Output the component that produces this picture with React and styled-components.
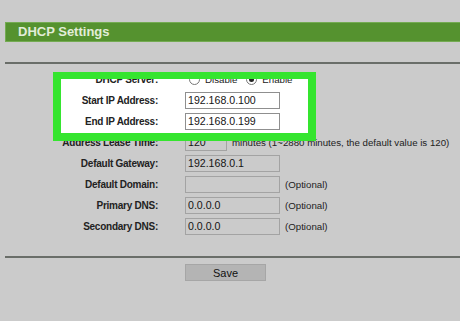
import React from "react";
import styled, { createGlobalStyle } from "styled-components";

const Global = createGlobalStyle`
  html, body { margin: 0; padding: 0; background: #cbcbcb; }
  body { font-family: "Liberation Sans", Arial, sans-serif; color: #1c1c1c; }
`;

const Page = styled.div`
  width: 460px;
  height: 321px;
  padding: 22px 0 0 5px;
  box-sizing: border-box;
  overflow: hidden;
`;

const TitleBar = styled.div`
  height: 20px;
  box-sizing: border-box;
  background: #55922f;
  border: 1px solid #74ab52;
  border-right: none;
  color: #e2edd8;
  font-weight: bold;
  font-size: 13px;
  line-height: 18px;
  padding-left: 12px;
`;

const Divider = styled.div`
  height: 2px;
  background: #6a6e69;
  margin-top: ${(p) => p.$top}px;
`;

const Form = styled.div`
  position: relative;
  padding-top: 5px;
`;

const Rows = styled.div`
  position: relative;
  z-index: 1;
  display: grid;
  grid-template-columns: 153px 1fr;
  grid-auto-rows: 21px;
  column-gap: 27px;
  align-items: center;
`;

const Label = styled.div`
  text-align: right;
  font-weight: bold;
  font-size: 10px;
  letter-spacing: -0.25px;
  color: #222;
  white-space: nowrap;
`;

const Control = styled.div`
  display: flex;
  align-items: center;
  gap: 5px;
  font-size: 9.7px;
  color: #222;
  white-space: nowrap;
`;

const Field = styled.div`
  width: ${(p) => p.$w || 95}px;
  height: 17px;
  box-sizing: border-box;
  border: 1px solid ${(p) => (p.$on ? "#8f8f8f" : "#a3a3a3")};
  background: ${(p) => (p.$on ? "#ffffff" : "#cbcbcb")};
  font-size: 10.6px;
  line-height: 15px;
  padding-left: 2px;
  color: #141414;
`;

const Radio = styled.span`
  display: inline-block;
  width: 9px;
  height: 9px;
  border-radius: 50%;
  border: 1px solid #777;
  background: #fff;
  position: relative;
  margin-left: ${(p) => p.$ml || 0}px;
  &::after {
    content: "";
    display: ${(p) => (p.$checked ? "block" : "none")};
    position: absolute;
    left: 2px;
    top: 2px;
    width: 5px;
    height: 5px;
    border-radius: 50%;
    background: #222;
  }
`;

const HighlightFill = styled.div`
  position: absolute;
  z-index: 0;
  left: 48px;
  top: 8px;
  width: 263px;
  height: 69px;
  background: #ffffff;
`;

const HighlightFrame = styled.div`
  position: absolute;
  z-index: 2;
  left: 48px;
  top: 8px;
  width: 263px;
  height: 69px;
  box-sizing: border-box;
  border: 8px solid #35e52f;
  border-top-width: 7px;
`;

const SaveButton = styled.button`
  display: block;
  margin: 6px 0 0 180px;
  width: 81px;
  height: 17px;
  padding: 0;
  background: #b4b4b4;
  border: 1px solid #a6a6a6;
  font-family: "Liberation Sans", Arial, sans-serif;
  font-size: 11px;
  color: #111;
`;

const rows = [
  { label: "DHCP Server:", radio: true },
  { label: "Start IP Address:", value: "192.168.0.100", on: true },
  { label: "End IP Address:", value: "192.168.0.199", on: true },
  { label: "Address Lease Time:", value: "120", w: 42, note: "minutes (1~2880 minutes, the default value is 120)" },
  { label: "Default Gateway:", value: "192.168.0.1" },
  { label: "Default Domain:", value: "", note: "(Optional)" },
  { label: "Primary DNS:", value: "0.0.0.0", note: "(Optional)" },
  { label: "Secondary DNS:", value: "0.0.0.0", note: "(Optional)" },
];

export default function App() {
  return (
    <>
      <Global />
      <Page>
        <TitleBar>DHCP Settings</TitleBar>
        <Divider $top={20} />
        <Form>
          <HighlightFill />
          <Rows>
            {rows.map((r) => (
              <React.Fragment key={r.label}>
                <Label>{r.label}</Label>
                <Control>
                  {r.radio ? (
                    <>
                      <Radio $ml={4} />
                      <span>Disable</span>
                      <Radio $ml={4} $checked />
                      <span>Enable</span>
                    </>
                  ) : (
                    <>
                      <Field $on={r.on} $w={r.w}>{r.value}</Field>
                      {r.note && <span>{r.note}</span>}
                    </>
                  )}
                </Control>
              </React.Fragment>
            ))}
          </Rows>
          <HighlightFrame />
        </Form>
        <Divider $top={19} />
        <SaveButton>Save</SaveButton>
      </Page>
    </>
  );
}
